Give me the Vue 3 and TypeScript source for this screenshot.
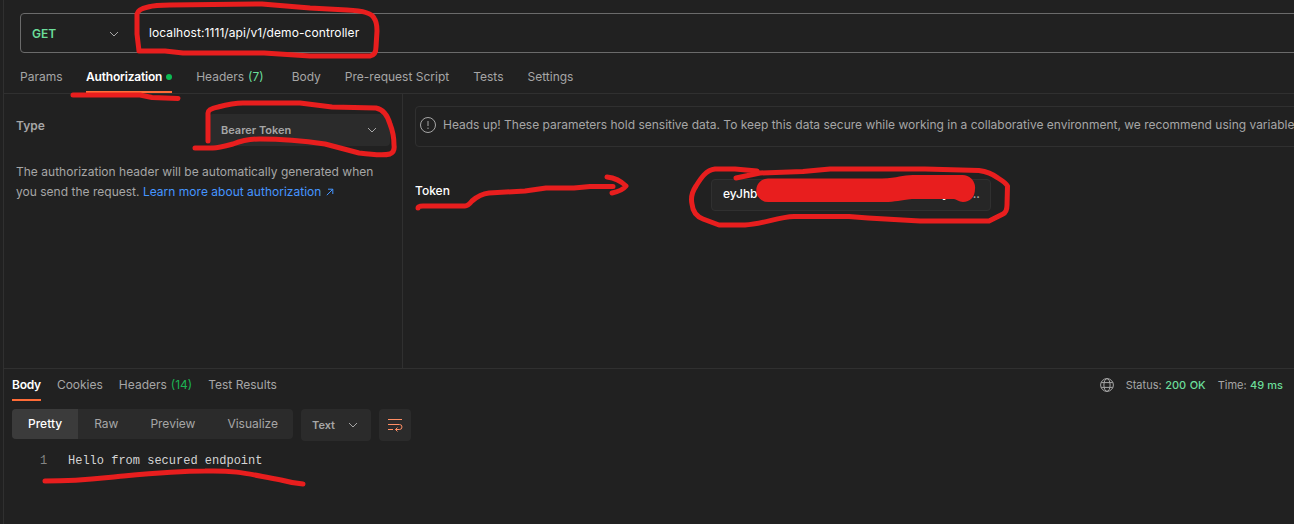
<script setup lang="ts">
interface Tab {
  label: string
  count?: string
  active?: boolean
  dot?: boolean
}

const requestTabs: Tab[] = [
  { label: 'Params' },
  { label: 'Authorization', active: true, dot: true },
  { label: 'Headers', count: '(7)' },
  { label: 'Body' },
  { label: 'Pre-request Script' },
  { label: 'Tests' },
  { label: 'Settings' },
]

const responseTabs: Tab[] = [
  { label: 'Body', active: true },
  { label: 'Cookies' },
  { label: 'Headers', count: '(14)' },
  { label: 'Test Results' },
]

const views: string[] = ['Pretty', 'Raw', 'Preview', 'Visualize']
</script>

<template>
  <div class="app">
    <div class="url-bar">
      <div class="method">
        <span>GET</span>
        <svg class="chevron" width="10" height="6" viewBox="0 0 10 6"><path d="M1 1l4 4 4-4" /></svg>
      </div>
      <div class="url">localhost:1111/api/v1/demo-controller</div>
    </div>

    <nav class="tabs request-tabs">
      <div v-for="tab in requestTabs" :key="tab.label" class="tab" :class="{ active: tab.active }">
        <span>{{ tab.label }}</span>
        <span v-if="tab.count" class="count">{{ tab.count }}</span>
        <i v-if="tab.dot" class="dot"></i>
      </div>
    </nav>

    <section class="auth">
      <aside class="auth-side">
        <div class="type-row">
          <span class="type-label">Type</span>
          <div class="type-select">
            <span>Bearer Token</span>
            <svg class="chevron" width="10" height="6" viewBox="0 0 10 6"><path d="M1 1l4 4 4-4" /></svg>
          </div>
        </div>
        <p class="hint">
          The authorization header will be automatically generated when<br />you send the request.
          <a>Learn more about authorization
            <svg class="ext" width="8" height="8" viewBox="0 0 8 8"><path d="M.8 7.2L6.8 1.200M2 1.200H6.800V6" /></svg></a>
        </p>
      </aside>
      <div class="auth-main">
        <div class="alert">
          <svg width="18" height="18" viewBox="0 0 18 18">
            <circle cx="9" cy="9" r="7.5" />
            <path d="M9 5v5M9 11.6v1.4" />
          </svg>
          <span>Heads up! These parameters hold sensitive data. To keep this data secure while working in a collaborative environment, we recommend using variable</span>
        </div>
        <div class="token-row">
          <span class="token-label">Token</span>
          <div class="token-input"><span>eyJhb</span><span class="token-tail">y</span><span class="dots">...</span></div>
        </div>
      </div>
    </section>

    <section class="response">
      <div class="response-head">
        <nav class="tabs response-tabs">
          <div v-for="tab in responseTabs" :key="tab.label" class="tab" :class="{ active: tab.active }">
            <span>{{ tab.label }}</span>
            <span v-if="tab.count" class="count">{{ tab.count }}</span>
          </div>
        </nav>
        <div class="meta">
          <svg class="globe" width="14" height="14" viewBox="0 0 14 14">
            <circle cx="7" cy="7" r="6.4" />
            <ellipse cx="7" cy="7" rx="3.1" ry="6.4" />
            <path d="M1.2 4.6h11.6M1.2 9.4h11.6" />
          </svg>
          <span class="status">Status: <b>200 OK</b></span>
          <span class="time">Time: <b>49 ms</b></span>
        </div>
      </div>
      <div class="toolbar">
        <div class="views">
          <div v-for="(view, i) in views" :key="view" class="view" :class="{ selected: i === 0 }">{{ view }}</div>
        </div>
        <div class="format">
          <span>Text</span>
          <svg class="chevron" width="10" height="6" viewBox="0 0 10 6"><path d="M1 1l4 4 4-4" /></svg>
        </div>
        <div class="wrap">
          <svg width="16" height="14" viewBox="0 0 16 14">
            <path d="M1 1.5h14M1 6.500h11.500a2.300 2.300 0 0 1 0 5H8.500M1 11.500h5M10.500 9.500l-2 2 2 2" />
          </svg>
        </div>
      </div>
      <div class="code"><span class="line-no">1</span><span>Hello from secured endpoint</span></div>
    </section>

    <svg class="ink" width="1294" height="524" viewBox="0 0 1294 524">
      <path d="M139 51L137 34V14Q138 9 148 7Q155 5 170 5L262 4L310 8L347 10Q371 11 374 18Q377 22 377 31L376 47Q376 55 370 56H310L264 53H183L165 51H139" />
      <path d="M73 95H140L152 97.500L178 98.500" />
      <path d="M208 141V113Q208 109 218 107Q233 103 243 103H300L332 107L376 108Q386 110 390 124Q394 134 394 145Q395 152 390 154Q382 156 359 153L344 149L325 144Q291 139 260 139Q246 139 233 144Q218 148 213 148H195" />
      <path d="M418 208Q418 206 423 206H465Q468 206 472 201Q480 194 489 193L525 191L546 188H574L590 186.500H613M607 177C616 178 622 182 626 186Q622 191 612 193" />
      <path d="M757 171L735 169H715C706 170 701 178 696 186Q690 195 692 204Q693 215 703 219L719 225H745C763 224 778 217 794 216.500H849L868 218L920 221H989L1003 214Q1007 212 1007 205L1007.500 186Q1006 183 998 178Q990 172 979 170.500L925 169H830L803 171.500L760 173L736 178" />
      <path d="M45 481C79 481 93 479 118 476.500C145 474 175 471 205 471C239 470 252 475 281 480Q292 483 303 484" />
      <path class="redact" d="M768 178.500H882C898 178 902 175 913 175H962A12.500 12.500 0 0 1 975 189C975 197 970 202 963 202C959 202 956 199 954 199H912C900 200 896 202 884 202H768A11.750 11.750 0 0 1 768 178.500Z" />
    </svg>
  </div>
</template>

<style>
body {
  margin: 0;
  background: #212121;
  overflow: hidden;
}
</style>

<style scoped>
.app {
  position: relative;
  box-sizing: border-box;
  width: 1294px;
  height: 524px;
  overflow: hidden;
  padding-left: 3px;
  background: linear-gradient(90deg, #212121 3px, #303030 3px, #303030 4px, #212121 4px);
  color: #a6a6a6;
  font: 12px/20px Inter, sans-serif;
  white-space: nowrap;
}
svg {
  flex: none;
  fill: none;
  stroke: #a6a6a6;
}
.url-bar {
  box-sizing: border-box;
  display: flex;
  align-items: center;
  width: 1290px;
  height: 40px;
  margin: 13px 0 0 17px;
  border: 1px solid #6b6b6b;
  border-radius: 4px;
}
.method {
  box-sizing: border-box;
  display: flex;
  align-items: center;
  justify-content: space-between;
  width: 98px;
  padding: 2px 0 0 11px;
  color: #6bdd9a;
  font-weight: 600;
}
.url {
  margin-left: 30px;
  color: #fff;
  letter-spacing: 0.08px;
}
.tabs {
  display: flex;
}
.tab {
  position: relative;
  display: flex;
  gap: 4px;
}
.active {
  color: #fff;
  font-weight: 600;
}
.active::after {
  content: '';
  position: absolute;
  left: 0;
  right: 0;
  bottom: 0;
  height: 2px;
  background: #ff6c37;
}
.request-tabs {
  height: 40px;
  margin-left: 1px;
  padding-left: 16px;
  gap: 24px;
  border-bottom: 1px solid #303030;
}
.request-tabs .tab {
  padding-top: 14px;
}
.request-tabs .active {
  margin-left: -0.5px;
  letter-spacing: -0.2px;
}
.request-tabs .count {
  margin-right: 4px;
  color: #6bdd9a;
}
.dot {
  width: 6px;
  height: 6px;
  margin-top: 7px;
  border-radius: 50%;
  background: #0cbb52;
}
.auth {
  display: flex;
  height: 274px;
  margin-left: 1px;
}
.auth-side {
  box-sizing: border-box;
  width: 399px;
  flex: none;
  padding: 20px 12px 0;
  border-right: 1px solid #303030;
}
.type-row {
  display: flex;
  justify-content: space-between;
  height: 32px;
}
.type-label {
  padding-top: 2px;
  font-weight: 600;
}
.type-select {
  box-sizing: border-box;
  display: flex;
  align-items: center;
  justify-content: space-between;
  width: 181px;
  height: 32px;
  padding: 0 13px 0 12px;
  border-radius: 4px;
  background: #2b2b2b;
  font-size: 11px;
  font-weight: 600;
}
.hint {
  margin: 16px 0 0;
  letter-spacing: 0.016px;
}
.hint a {
  color: #4595ff;
}
.ext {
  margin-left: 1px;
  stroke: #4595ff;
}
.auth-main {
  flex: none;
  width: 900px;
  padding: 12px 0 0 12px;
}
.alert {
  box-sizing: border-box;
  display: flex;
  align-items: center;
  gap: 6px;
  height: 41px;
  padding: 0 3px 3px;
  border: 1px solid #303030;
  border-radius: 4px;
}
.alert span {
  letter-spacing: -0.005px;
}
.token-row {
  display: flex;
  margin-top: 32px;
}
.token-label {
  width: 296px;
  padding-top: 2px;
  color: #fff;
  font-weight: 500;
}
.token-input {
  box-sizing: border-box;
  display: flex;
  align-items: center;
  width: 280px;
  height: 32px;
  padding: 0 10px 2px 11px;
  border: 1px solid #303030;
  border-radius: 4px;
  background: #262626;
  color: #fff;
  font-weight: 500;
}
.token-tail {
  margin-left: auto;
}
.dots {
  width: 11px;
  margin-left: 20px;
  color: #a6a6a6;
}
.response {
  margin-left: 1px;
  border-top: 1px solid #303030;
}
.response-head {
  display: flex;
  justify-content: space-between;
  height: 32px;
  padding: 0 11px 0 8px;
}
.response-tabs {
  gap: 16px;
}
.response-tabs .tab {
  padding-top: 6px;
}
.response-tabs .active {
  letter-spacing: -0.25px;
}
.response-tabs .count {
  color: #1db354;
}
.meta {
  display: flex;
  align-items: center;
  font-size: 11px;
}
.status {
  margin-left: 12px;
  word-spacing: 0.5px;
}
.time {
  margin-left: 12px;
  word-spacing: 0.25px;
}
.meta b {
  color: #6bdd9a;
  font-weight: 500;
}
.toolbar {
  display: flex;
  gap: 8px;
  padding: 8px 0 0 8px;
}
.views {
  display: flex;
  width: 281px;
  height: 30px;
  border-radius: 4px;
  background: #2b2b2b;
  overflow: hidden;
}
.view {
  padding: 5px 16px;
}
.selected {
  background: #3b3b3b;
  color: #fff;
  font-weight: 500;
}
.format,
.wrap {
  box-sizing: border-box;
  display: flex;
  align-items: center;
  height: 32px;
  border-radius: 4px;
  background: #2b2b2b;
}
.format {
  justify-content: space-between;
  width: 70px;
  padding: 0 13px 0 11px;
  font-size: 11px;
  font-weight: 600;
}
.wrap {
  width: 32px;
  justify-content: center;
}
.wrap svg {
  stroke: #ff8e64;
}
.code {
  display: flex;
  margin-top: 10px;
  padding-left: 36px;
  color: #d4d4d4;
  font: 12px/20px "Liberation Mono", monospace;
}
.line-no {
  width: 28px;
  color: #858585;
}
.ink {
  position: absolute;
  left: 0;
  top: 0;
}
.ink path {
  stroke: #e81e1e;
  stroke-width: 5px;
  stroke-linecap: round;
  stroke-linejoin: round;
}
.ink .redact {
  fill: #e81e1e;
  stroke: none;
}
</style>
